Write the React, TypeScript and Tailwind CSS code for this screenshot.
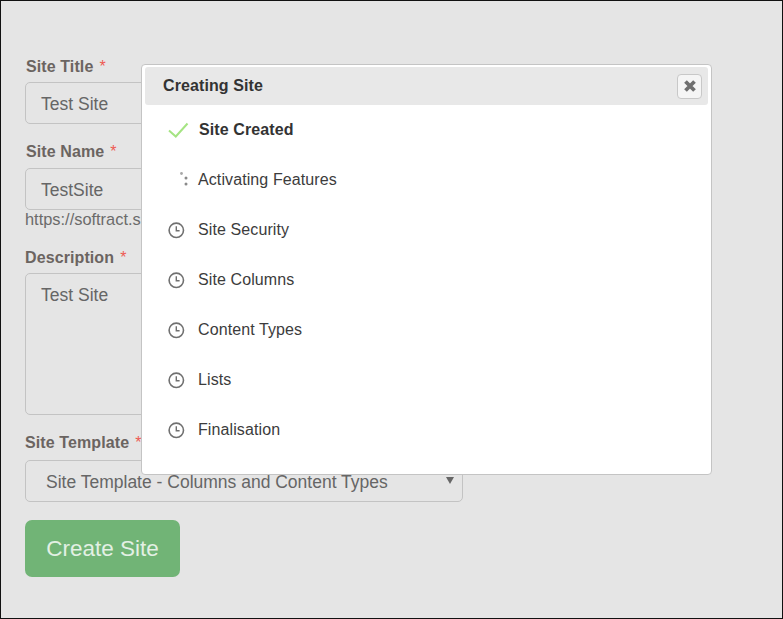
const steps = ['Site Security', 'Site Columns', 'Content Types', 'Lists', 'Finalisation']

const ClockIcon = () => (
  <svg width="17" height="17" viewBox="0 0 17 17" fill="none" stroke="#707070" className="shrink-0">
    <circle cx="8.3" cy="8.3" r="7.2" strokeWidth="1.6" />
    <path d="M8.3 4.2V8.7H11.6" strokeWidth="1.4" />
  </svg>
)

const CheckIcon = () => (
  <svg width="21" height="16" viewBox="0 0 21 16" fill="none" stroke="#a5e483" strokeWidth="2" className="shrink-0">
    <path d="M1 8.5L7.8 14.5L19.5 1.5" />
  </svg>
)

const Spinner = () => (
  <svg width="10" height="18" viewBox="0 0 10 18" fill="#8a8a8a">
    <circle cx="2.5" cy="2.5" r="1.4" fill="#a8a8a8" />
    <circle cx="7" cy="7" r="1.5" />
    <circle cx="7" cy="13" r="1.5" />
  </svg>
)

const Label = ({ text, className = '' }: { text: string; className?: string }) => (
  <label className={`flex h-[22px] items-center text-[16px] font-bold tracking-[0.1px] text-[#6b6461] ${className}`}>
    {text}
    <span className="ml-[6px] font-normal text-[#ee5a52]">*</span>
  </label>
)

const inputClass =
  'flex w-[438px] items-start rounded-[5px] border border-[#c3c3c3] bg-[#e5e5e5] pl-[15px] text-[17.5px] text-[#666666]'

export default function App() {
  return (
    <div className="relative h-[619px] w-[783px] overflow-hidden border border-[#111111] bg-[#e5e5e5] font-['Liberation_Sans',Arial,sans-serif]">
      <form className="flex flex-col pl-[24px] pt-[55px]">
        <Label text="Site Title" className="ml-[1px]" />
        <div className={`${inputClass} mt-[4px] h-[42px] pt-[8px]`}>Test Site</div>
        <Label text="Site Name" className="ml-[1px] mt-[17px]" />
        <div className={`${inputClass} mt-[5px] h-[42px] pt-[8px]`}>TestSite</div>
        <p className="h-[19px] text-[16.4px] leading-[19px] text-[#6b6b6b]">https://softract.s</p>
        <Label text="Description" className="mt-[18px]" />
        <div className={`${inputClass} mt-[4px] h-[142px] pt-[8px]`}>Test Site</div>
        <Label text="Site Template" className="mt-[17px]" />
        <div className={`${inputClass} relative mt-[6px] h-[42px] !pl-[20px] pt-[8px]`}>
          Site Template - Columns and Content Types
          <span className="absolute right-[8px] top-[16px] h-0 w-0 border-x-[4px] border-t-[7px] border-x-transparent border-t-[#666666]" />
        </div>
        <button
          type="button"
          className="mt-[18px] h-[57px] w-[155px] rounded-[7px] bg-[#71b476] text-[22.5px] text-[#e3f0e4]"
        >
          Create Site
        </button>
      </form>

      <div className="absolute left-[140px] top-[63px] h-[411px] w-[571px] rounded-[4px] border border-[#c4c4c4] bg-white px-[3px] pt-[2px]">
        <div className="flex h-[38px] items-center justify-between rounded-[3px] bg-[#e8e8e8] pl-[18px] pr-[5px]">
          <h2 className="text-[16px] font-bold tracking-[0.1px] text-[#333333]">Creating Site</h2>
          <button
            type="button"
            className="mr-[1px] flex h-[25px] w-[25px] items-center justify-center rounded-[4px] border border-[#c8c8c8] bg-[#f5f5f5] text-[#6f6f6f]"
          >
            <svg width="14" height="14" viewBox="0 0 14 14" stroke="currentColor" strokeWidth="3.8">
              <path d="M2.5 2.5L11.5 11.5M11.5 2.5L2.5 11.5" />
            </svg>
          </button>
        </div>
        <ul className="flex flex-col pl-[23px] text-[16px] tracking-[0.1px] text-[#3c3c3c]">
          <li className="flex h-[50px] items-center gap-[10px]">
            <CheckIcon />
            <span className="font-bold text-[#333333]">Site Created</span>
          </li>
          <li className="flex h-[50px] items-center">
            <span className="ml-[11px] mr-[9px] flex w-[10px]">
              <Spinner />
            </span>
            Activating Features
          </li>
          {steps.map((step) => (
            <li key={step} className="flex h-[50px] items-center gap-[13px]">
              <ClockIcon />
              {step}
            </li>
          ))}
        </ul>
      </div>
    </div>
  )
}
